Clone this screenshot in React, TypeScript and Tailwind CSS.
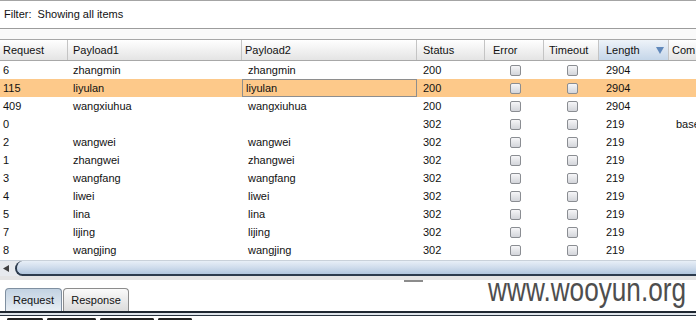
import React from "react";

type Row = { r: string; p1: string; p2: string; s: string; l: string; c?: string; sel?: boolean };

const rows: Row[] = [
  { r: "6", p1: "zhangmin", p2: "zhangmin", s: "200", l: "2904" },
  { r: "115", p1: "liyulan", p2: "liyulan", s: "200", l: "2904", sel: true },
  { r: "409", p1: "wangxiuhua", p2: "wangxiuhua", s: "200", l: "2904" },
  { r: "0", p1: "", p2: "", s: "302", l: "219", c: "base" },
  { r: "2", p1: "wangwei", p2: "wangwei", s: "302", l: "219" },
  { r: "1", p1: "zhangwei", p2: "zhangwei", s: "302", l: "219" },
  { r: "3", p1: "wangfang", p2: "wangfang", s: "302", l: "219" },
  { r: "4", p1: "liwei", p2: "liwei", s: "302", l: "219" },
  { r: "5", p1: "lina", p2: "lina", s: "302", l: "219" },
  { r: "7", p1: "lijing", p2: "lijing", s: "302", l: "219" },
  { r: "8", p1: "wangjing", p2: "wangjing", s: "302", l: "219" },
];

function Check() {
  return (
    <div className="w-[11px] h-[11px] rounded-[2px] border border-[#8a8d92] bg-gradient-to-b from-[#f6f6f8] to-[#d3d5da]" />
  );
}

function HCell({ cls, children }: { cls: string; children: React.ReactNode }) {
  return (
    <div className={`h-full flex items-center shrink-0 border-r border-[#c4c4c4] ${cls}`}>{children}</div>
  );
}

export default function App() {
  return (
    <div
      className="relative w-[696px] h-[320px] overflow-hidden bg-white text-[11px] text-[#111]"
      style={{ fontFamily: "'Liberation Sans', Arial, sans-serif" }}
    >
      {/* top line */}
      <div className="h-px bg-[#a4a4a4]" />
      {/* filter bar */}
      <div className="h-[27px] flex items-center pl-[4px] bg-white">Filter:&nbsp; Showing all items</div>
      <div className="h-px bg-[#9c9c9c]" />
      <div className="h-[10px] bg-[#fafafa]" />

      {/* header */}
      <div className="h-[22px] flex border-t border-b border-[#a8a8a8] bg-gradient-to-b from-[#ffffff] to-[#e4e4e4]">
        <HCell cls="w-[68px] pl-[3px]">Request</HCell>
        <HCell cls="w-[174px] pl-[5px]">Payload1</HCell>
        <HCell cls="w-[175px] pl-[3px]">Payload2</HCell>
        <HCell cls="w-[68px] pl-[6px]">Status</HCell>
        <HCell cls="w-[59px] pl-[8px]">Error</HCell>
        <HCell cls="w-[55px] pl-[5px]">Timeout</HCell>
        <HCell cls="w-[70px] pl-[7px] justify-between pr-[4px] bg-gradient-to-b from-[#eef3f9] to-[#c5d6e9]">
          <span>Length</span>
          <svg width="8" height="7" viewBox="0 0 8 7">
            <path d="M0 0 H8 L4 7 Z" fill="#6088bb" />
          </svg>
        </HCell>
        <div className="h-full flex items-center pl-[3px] flex-1">Com</div>
      </div>

      {/* rows */}
      <div className="h-[199px] bg-white">
        {rows.map((row, i) => (
          <div key={i} className={`h-[18px] flex items-center ${row.sel ? "bg-[#fdc98a]" : ""}`}>
            <div className="w-[68px] pl-[3px] shrink-0">{row.r}</div>
            <div className="w-[174px] pl-[5px] shrink-0">{row.p1}</div>
            <div
              className={`w-[175px] shrink-0 h-full flex items-center ${
                row.sel ? "border border-[#8e8e8e] pl-[3px]" : "pl-[6px]"
              }`}
            >
              {row.p2}
            </div>
            <div className="w-[68px] pl-[6px] shrink-0">{row.s}</div>
            <div className="w-[59px] shrink-0 flex justify-center pl-[2px]">
              <Check />
            </div>
            <div className="w-[55px] shrink-0 flex justify-center pl-[2px]">
              <Check />
            </div>
            <div className="w-[70px] pl-[7px] shrink-0">{row.l}</div>
            <div className="flex-1 pl-[7px] whitespace-nowrap">{row.c ?? ""}</div>
          </div>
        ))}
      </div>

      {/* horizontal scrollbar */}
      <div className="h-[16px] flex border-t border-[#c9d1da] bg-[#e7eaee]">
        <div className="w-[15px] shrink-0 flex items-center pl-[3px]">
          <svg width="6" height="7" viewBox="0 0 6 7">
            <path d="M6 0 V7 L0 3.5 Z" fill="#404040" />
          </svg>
        </div>
        <div className="flex-1 rounded-l-[8px] border-l-2 border-b-2 border-[#2c3b4d] bg-gradient-to-b from-[#e8eff7] via-[#cfdcec] to-[#b2c7de]" />
      </div>

      {/* splitter */}
      <div className="h-[10px] bg-white relative">
        <div className="h-[4px] bg-[#e4e4e4]" />
        <div className="absolute left-[404px] top-[4px] w-[19px] h-[2px] bg-[#8c8c8c]" />
      </div>

      {/* tabs */}
      <div className="h-[25px] flex items-end pl-[5px] bg-white">
        <div className="w-[57px] h-[23px] flex items-center justify-center rounded-t-[4px] border border-b-0 border-[#7f8fa0] bg-gradient-to-b from-[#c2d2e2] to-[#e8eef4]">
          Request
        </div>
        <div className="ml-px w-[66px] h-[23px] flex items-center justify-center rounded-t-[4px] border border-b-0 border-[#8c8c8c] bg-gradient-to-b from-[#fafafa] to-[#dcdcdc]">
          Response
        </div>
      </div>
      <div className="h-[2px] bg-[#1e2630]" />
      <div className="h-[2px] bg-[#dfe4ea]" />
      <div className="h-px bg-[#2a3440]" />
      <div className="h-[6px] flex items-end gap-[4px] pl-[7px] bg-white">
        <div className="w-[36px] h-[4px] border-t-2 border-x-2 border-[#222] rounded-t-[2px]" />
        <div className="w-[49px] h-[4px] border-t-2 border-x-2 border-[#222] rounded-t-[2px]" />
        <div className="w-[54px] h-[4px] border-t-2 border-x-2 border-[#222] rounded-t-[2px]" />
        <div className="w-[34px] h-[4px] border-t-2 border-x-2 border-[#222] rounded-t-[2px]" />
      </div>

      {/* watermark */}
      <div
        className="absolute right-[10px] top-[272px] text-[34px] leading-none text-[#4e4e4e] origin-right scale-x-[0.77] whitespace-nowrap"
        style={{ fontFamily: "'Liberation Sans', Arial, sans-serif" }}
      >
        www.wooyun.org
      </div>
    </div>
  );
}
